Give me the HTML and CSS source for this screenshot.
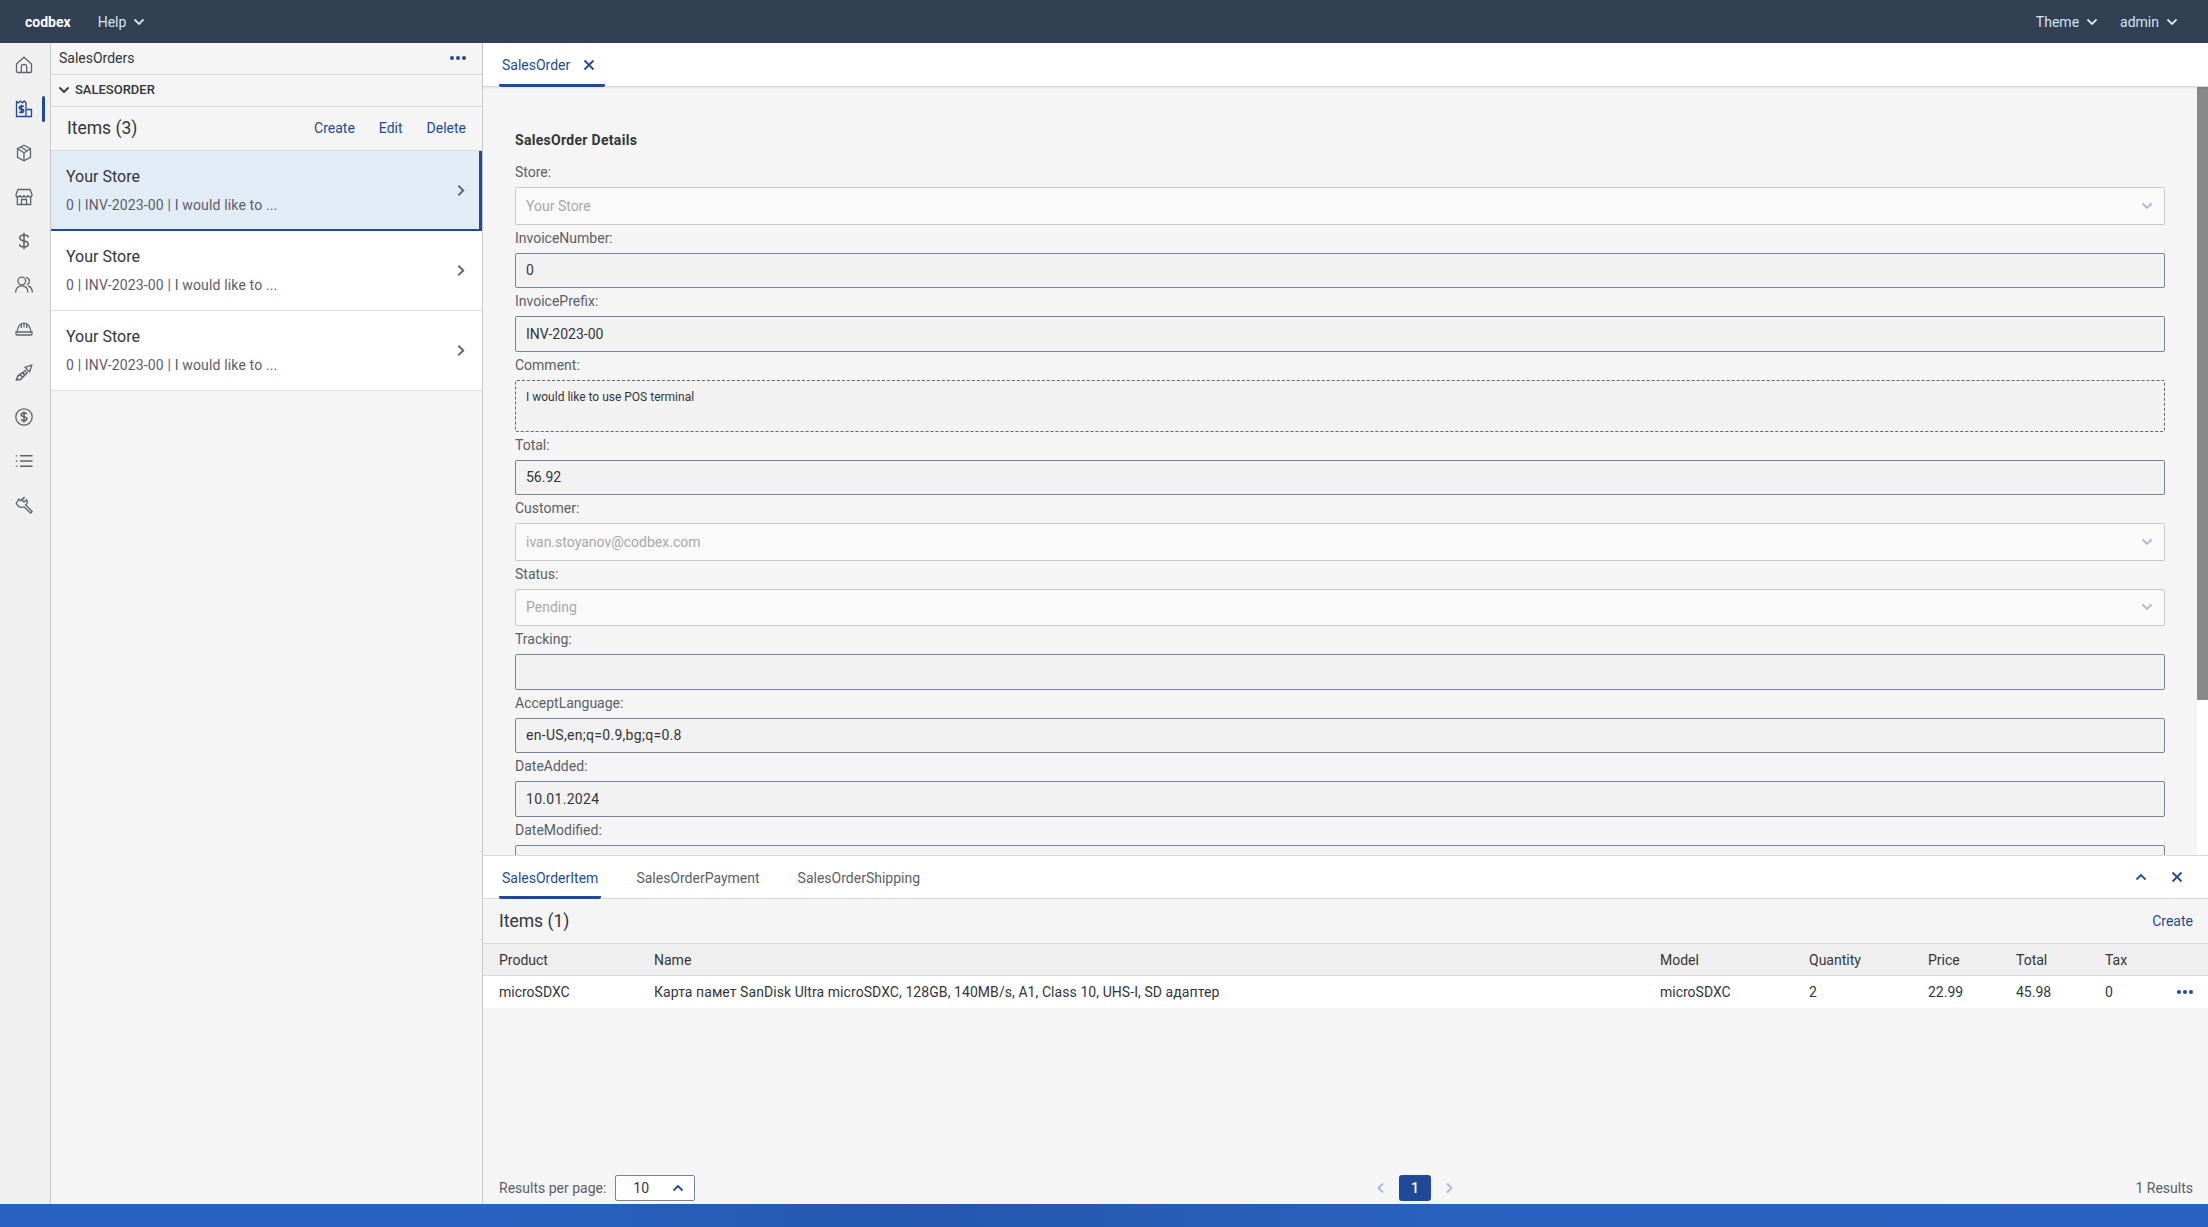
FILE: index.html
```html
<!DOCTYPE html>
<html lang="en">
<head>
    <meta charset="UTF-8">
    <title>codbex</title>
    <link rel="stylesheet" href="styles.css">
</head>
<body>
    <header class="topbar">
        <span class="brand">codbex</span>
        <span class="top-menu help">Help <svg class="chev" viewBox="0 0 12 12"><path d="M1.500 3.500 6 8l4.500-4.500"/></svg></span>
        <span class="top-menu theme">Theme <svg class="chev" viewBox="0 0 12 12"><path d="M1.500 3.500 6 8l4.500-4.500"/></svg></span>
        <span class="top-menu user">admin <svg class="chev" viewBox="0 0 12 12"><path d="M1.500 3.500 6 8l4.500-4.500"/></svg></span>
    </header>

    <div class="app">
        <nav class="sidenav">
            <div class="nav-item"><svg viewBox="0 0 18 18"><path d="M1.500 8 9 1.200 16.500 8v7.300a1.200 1.200 0 0 1-1.200 1.200H2.700a1.200 1.200 0 0 1-1.200-1.200z"/><path d="M6.300 16.500V11a2.700 2.700 0 0 1 5.400 0v5.500"/></svg></div>
            <div class="nav-item active"><svg viewBox="0 0 18 18"><path d="M1.500 1.500l1.800 1.300 2-1.800 2 1.800 2-1.800 1.700 1.800V16.500h-9.500z"/><path d="M11.500 9.500h5v7h-5"/><path class="thick" d="M8.800 6.200H5.900a1.300 1.300 0 0 0 0 3h1.300a1.300 1.300 0 0 1 0 3H4.200M6.500 4.800v8.800"/></svg><span class="nav-mark"></span></div>
            <div class="nav-item"><svg viewBox="0 0 18 18"><path d="M9 1.200l6.500 3.500v8.600L9 16.800l-6.500-3.500V4.700z"/><path d="M2.500 4.700 9 8.800l6.500-4.100M9 8.800v8M5.700 3l6.500 3.800"/></svg></div>
            <div class="nav-item"><svg viewBox="0 0 18 18"><path d="M3 1.500h12l2 5a2 2 0 0 1-4 .5 2 2 0 0 1-4 0 2 2 0 0 1-4 0 2 2 0 0 1-4-.5z"/><path d="M2.300 9v7.500h13.400V9M6.500 16.500v-5h5v5"/></svg></div>
            <div class="nav-item"><svg viewBox="0 0 18 18"><path class="thick" d="M13.500 5.500C13.200 4 11.500 3 9 3 6.500 3 4.800 4.200 4.800 6c0 2 2.200 2.600 4.200 3s4.300 1 4.300 3c0 1.900-1.800 3-4.300 3s-4.200-1-4.500-2.600M9 .8v16.400"/></svg></div>
            <div class="nav-item"><svg viewBox="0 0 18 18"><circle cx="6.800" cy="5" r="3.800"/><path d="M.6 16.500C.8 12 3.100 9.800 6.800 9.800s6 2.200 6.200 6.700M11 1.300a3.800 3.800 0 0 1 1 7.300M13.200 10c2.600.7 4 3 4.200 6.500"/></svg></div>
            <div class="nav-item"><svg viewBox="0 0 18 18"><path d="M2.300 12C2.300 6.500 5.300 3.200 9 3.200s6.700 3.300 6.700 8.800"/><path d="M1 12h16v2a1 1 0 0 1-1 1H2a1 1 0 0 1-1-1zM6.300 4v4M9 3.200v4M11.700 4v4"/></svg></div>
            <div class="nav-item"><svg viewBox="0 0 18 18"><path d="M10 3.300 16.800 1 14.700 7.900z"/><path class="thick" d="M11.300 6.200 3 11.800l-1.500 4 4-.3 7.300-7.600M4.800 10.500l3 3M7.300 8.500l3 3"/></svg></div>
            <div class="nav-item"><svg viewBox="0 0 18 18"><circle cx="9" cy="9" r="8.200"/><path class="thick" d="M11.800 6.300C11.500 5.300 10.500 4.800 9 4.800c-1.700 0-2.800.8-2.800 2s1.400 1.700 2.800 2 2.800.8 2.800 2-1.100 2-2.800 2c-1.500 0-2.500-.6-2.800-1.600M9 3.500v11"/></svg></div>
            <div class="nav-item"><svg viewBox="0 0 18 18"><path class="thick" d="M5 3.800h12.500M5 9h12.500M5 14.200h12.500"/><path d="M.8 3.800h1.500M.8 9h1.500M.8 14.200h1.500"/></svg></div>
            <div class="nav-item"><svg viewBox="0 0 18 18"><path d="M9.500 1.200 7 3.800l2 2.200 2.600-2.200c1.200 1.800.8 3.800-1 5l6.500 6.700-1.500 1.500-6.700-6.200c-2.200 1.200-4 .6-5.400-.6L1.200 7.500 3.800 3l2 2"/><path d="M5 5 9.500 1.200"/></svg></div>
        </nav>

        <aside class="list-panel">
            <div class="panel-title">
                <span>SalesOrders</span>
                <span class="dots"><i></i><i></i><i></i></span>
            </div>
            <div class="panel-section">
                <svg class="chev dark" viewBox="0 0 12 12"><path d="M1.500 3.500 6 8l4.500-4.500"/></svg>
                <span>SALESORDER</span>
            </div>
            <div class="panel-toolbar">
                <span class="toolbar-title">Items (3)</span>
                <span class="link">Create</span>
                <span class="link">Edit</span>
                <span class="link">Delete</span>
            </div>
            <div class="list-item selected">
                <div class="list-text">
                    <div class="item-title">Your Store</div>
                    <div class="item-sub">0 | INV-2023-00 | I would like to ...</div>
                </div>
                <svg class="list-arrow" viewBox="0 0 12 12"><path d="M4 1.500 8.500 6 4 10.500"/></svg>
            </div>
            <div class="list-item">
                <div class="list-text">
                    <div class="item-title">Your Store</div>
                    <div class="item-sub">0 | INV-2023-00 | I would like to ...</div>
                </div>
                <svg class="list-arrow" viewBox="0 0 12 12"><path d="M4 1.500 8.500 6 4 10.500"/></svg>
            </div>
            <div class="list-item">
                <div class="list-text">
                    <div class="item-title">Your Store</div>
                    <div class="item-sub">0 | INV-2023-00 | I would like to ...</div>
                </div>
                <svg class="list-arrow" viewBox="0 0 12 12"><path d="M4 1.500 8.500 6 4 10.500"/></svg>
            </div>
        </aside>

        <main class="detail">
            <div class="tabbar top-tabs">
                <div class="tab current">SalesOrder <svg class="tab-close" viewBox="0 0 12 12"><path d="M1.500 1.500l9 9M10.500 1.500l-9 9"/></svg></div>
            </div>

            <div class="form-pane">
                <div class="form-scroll">
                    <h4 class="form-title">SalesOrder Details</h4>
                    <label class="field-label">Store:</label>
                    <div class="box select">Your Store <svg class="chev pale" viewBox="0 0 12 12"><path d="M1.500 3.500 6 8l4.500-4.500"/></svg></div>
                    <label class="field-label">InvoiceNumber:</label>
                    <div class="box">0</div>
                    <label class="field-label">InvoicePrefix:</label>
                    <div class="box">INV-2023-00</div>
                    <label class="field-label">Comment:</label>
                    <div class="box area">I would like to use POS terminal</div>
                    <label class="field-label">Total:</label>
                    <div class="box">56.92</div>
                    <label class="field-label">Customer:</label>
                    <div class="box select">ivan.stoyanov@codbex.com <svg class="chev pale" viewBox="0 0 12 12"><path d="M1.500 3.500 6 8l4.500-4.500"/></svg></div>
                    <label class="field-label">Status:</label>
                    <div class="box select">Pending <svg class="chev pale" viewBox="0 0 12 12"><path d="M1.500 3.500 6 8l4.500-4.500"/></svg></div>
                    <label class="field-label">Tracking:</label>
                    <div class="box"></div>
                    <label class="field-label">AcceptLanguage:</label>
                    <div class="box wide-text">en-US,en;q=0.9,bg;q=0.8</div>
                    <label class="field-label">DateAdded:</label>
                    <div class="box wide-text">10.01.2024</div>
                    <label class="field-label">DateModified:</label>
                    <div class="box"></div>
                </div>
                <div class="scrollbar"><div class="thumb"></div></div>
            </div>

            <section class="related">
                <div class="tabbar related-tabs">
                    <div class="tab current">SalesOrderItem</div>
                    <div class="tab">SalesOrderPayment</div>
                    <div class="tab">SalesOrderShipping</div>
                    <div class="tab-tools">
                        <svg class="tool" viewBox="0 0 12 12"><path d="M1.500 8.500 6 4l4.500 4.500"/></svg>
                        <svg class="tool" viewBox="0 0 12 12"><path d="M1.500 1.500l9 9M10.500 1.500l-9 9"/></svg>
                    </div>
                </div>
                <div class="related-toolbar">
                    <span class="toolbar-title">Items (1)</span>
                    <span class="link">Create</span>
                </div>
                <div class="grid-row grid-head">
                    <span>Product</span><span>Name</span><span>Model</span><span>Quantity</span><span>Price</span><span>Total</span><span>Tax</span><span></span>
                </div>
                <div class="grid-row grid-body">
                    <span>microSDXC</span><span class="name-cell">Карта памет SanDisk Ultra microSDXC, 128GB, 140MB/s, A1, Class 10, UHS-I, SD адаптер</span><span>microSDXC</span><span>2</span><span>22.99</span><span>45.98</span><span>0</span><span class="dots"><i></i><i></i><i></i></span>
                </div>
                <div class="pager">
                    <div class="pager-left">
                        <span class="muted">Results per page:</span>
                        <div class="page-size"><span>10</span><svg class="tool small" viewBox="0 0 12 12"><path d="M1.500 8.500 6 4l4.500 4.500"/></svg></div>
                    </div>
                    <div class="pager-mid">
                        <svg class="pg-arrow" viewBox="0 0 12 12"><path d="M8 1.500 3.500 6 8 10.500"/></svg>
                        <span class="page-num">1</span>
                        <svg class="pg-arrow" viewBox="0 0 12 12"><path d="M4 1.500 8.500 6 4 10.500"/></svg>
                    </div>
                    <div class="pager-right muted">1 Results</div>
                </div>
            </section>
        </main>
    </div>

    <footer class="bottombar"></footer>
</body>
</html>
```

FILE: styles.css
```css
* {
    box-sizing: border-box;
}

body, html {
    margin: 0;
    padding: 0;
    height: 100%;
    overflow: hidden;
    font-family: Roboto, "Noto Sans", "Liberation Sans", sans-serif;
    font-size: 14px;
    color: #32363a;
    background: #f5f5f5;
}

body {
    display: flex;
    flex-direction: column;
}

svg {
    fill: none;
    stroke: currentColor;
    stroke-width: 1.8;
    flex: none;
}

/* top bar */
.topbar {
    height: 43px;
    flex: none;
    background: #314053;
    color: #d1e4fa;
    display: flex;
    align-items: center;
    padding: 0 30px 0 25px;
}

.brand {
    color: #fff;
    font-weight: 700;
    font-size: 14px;
    margin-right: 27px;
}

.top-menu {
    display: flex;
    align-items: center;
    gap: 7px;
    font-size: 14px;
}

.theme {
    margin-left: auto;
    margin-right: 22px;
}

.chev {
    width: 12px;
    height: 12px;
}

.chev.dark {
    color: #32363a;
}

.chev.pale {
    color: #a9b9d8;
    margin-left: auto;
}

/* main area */
.app {
    flex: 1;
    display: flex;
    min-height: 0;
}

.sidenav {
    width: 51px;
    flex: none;
    background: #f0f0f0;
    border-right: 1px solid #c9c9c9;
}

.nav-item {
    height: 44px;
    display: flex;
    align-items: center;
    justify-content: center;
    padding-right: 2px;
    color: #5f6368;
    position: relative;
}

.nav-item svg {
    width: 18px;
    height: 18px;
    stroke-width: 1.3;
}

.nav-item svg .thick {
    stroke-width: 1.6;
}

.nav-item.active {
    color: #1f4a97;
}

.nav-mark {
    position: absolute;
    left: 42px;
    top: 9px;
    width: 3px;
    height: 26px;
    border-radius: 2px;
    background: #1f4a97;
}

/* list panel */
.list-panel {
    width: 432px;
    flex: none;
    border-right: 1px solid #c9c9c9;
    background: #f5f5f5;
}

.panel-title {
    height: 32px;
    display: flex;
    align-items: center;
    justify-content: space-between;
    padding: 0 16px 2px 8px;
    border-bottom: 1px solid #d9d9d9;
}

.dots {
    display: inline-flex;
    gap: 2px;
    color: #1f4a97;
}

.dots i {
    width: 4px;
    height: 4px;
    border-radius: 50%;
    background: currentColor;
}

.panel-section {
    height: 32px;
    display: flex;
    align-items: center;
    gap: 5px;
    padding: 0 0 2px 7px;
    font-size: 13px;
    font-weight: 500;
    border-bottom: 1px solid #d9d9d9;
}

.panel-toolbar {
    height: 44px;
    display: flex;
    align-items: center;
    gap: 24px;
    padding: 0 16px 2px;
    border-bottom: 1px solid #d9d9d9;
}

.toolbar-title {
    font-size: 17.5px;
    margin-right: auto;
}

.link {
    color: #1f4a97;
}

.list-item {
    height: 80px;
    background: #fff;
    display: flex;
    align-items: center;
    justify-content: space-between;
    padding: 0 15px;
    border-bottom: 1px solid #e0e0e0;
}

.list-item.selected {
    background: #e2ecf7;
    border-bottom: 2px solid #1f4a97;
    border-right: 3px solid #1f4a97;
    padding-right: 12px;
}

.list-text {
    margin-top: -1px;
}

.item-title {
    font-size: 16px;
    margin-bottom: 11px;
}

.item-sub {
    color: #5a6066;
    letter-spacing: 0.15px;
}

.list-arrow {
    width: 13px;
    height: 13px;
    color: #5f6368;
}

/* tabs */
.detail {
    flex: 1;
    min-width: 0;
    display: flex;
    flex-direction: column;
}

.tabbar {
    flex: none;
    background: #fff;
    display: flex;
    padding-left: 16px;
    border-bottom: 1px solid #d9d9d9;
}

.top-tabs {
    height: 44px;
    box-shadow: 0 1px 2px rgba(0, 0, 0, 0.08);
    position: relative;
}

.tab {
    padding: 3px 3px 0;
    display: flex;
    align-items: center;
    color: #5a6066;
    border-bottom: 3px solid transparent;
    margin-bottom: -1px;
    margin-right: 32px;
}

.tab.current {
    color: #1f4a97;
    border-bottom-color: #1f4a97;
    border-radius: 0 0 2px 2px;
}

.top-tabs .tab {
    gap: 13px;
    padding-right: 10px;
}

.tab-close {
    width: 12px;
    height: 12px;
}

/* form */
.form-pane {
    flex: 1;
    min-height: 0;
    display: flex;
}

.form-scroll {
    flex: 1;
    min-width: 0;
    overflow: hidden;
    padding: 45px 32px 0;
    background: #f5f5f5;
}

.form-title {
    margin: 0;
    font-size: 14px;
    font-weight: 700;
    line-height: 16px;
    letter-spacing: 0.3px;
}

.field-label {
    display: block;
    height: 28px;
    line-height: 26px;
    color: #5a6066;
}

.form-title + .field-label {
    height: 39px;
    padding-top: 11px;
}

.box {
    height: 35.5px;
    display: flex;
    align-items: center;
    padding: 0 10px;
    color: #32363a;
    background: #f2f2f2;
    border: 1px solid #7a8499;
    border-radius: 2px;
}

.box.wide-text {
    letter-spacing: 0.3px;
}

.box.select {
    height: 37.5px;
    padding-right: 11px;
    background: #fafafa;
    border-color: #c7c9cf;
    color: #a8a8a8;
}

.box.area {
    height: 52px;
    align-items: flex-start;
    padding-top: 9px;
    font-size: 12px;
    line-height: 14px;
    border: 1px dashed #666;
}

.scrollbar {
    width: 11px;
    flex: none;
    background: #fff;
}

.thumb {
    height: 613px;
    background: #888;
}

/* related items */
.related {
    height: 349px;
    flex: none;
    display: flex;
    flex-direction: column;
    border-top: 1px solid #d9d9d9;
    background: #f5f5f5;
}

.related-tabs {
    height: 43px;
    align-items: stretch;
}

.tab-tools {
    margin-left: auto;
    display: flex;
    align-items: center;
    gap: 24px;
    padding-right: 25px;
    color: #1f4a97;
}

.tool {
    width: 12px;
    height: 12px;
}

.related-toolbar {
    height: 44px;
    display: flex;
    align-items: center;
    padding: 0 15px 0 16px;
}

.grid-row {
    display: grid;
    grid-template-columns: 155px 1006px 149px 119px 88px 89px 1fr 20px;
    align-items: center;
    padding: 0 15px 0 16px;
}

.grid-head {
    height: 33px;
    background: #efefef;
    border-top: 1px solid #d9d9d9;
    border-bottom: 1px solid #d9d9d9;
}

.grid-body {
    height: 32px;
    background: #fff;
}

.grid-body .dots {
    justify-self: end;
}

.name-cell {
    letter-spacing: 0.07px;
}

.pager {
    margin-top: auto;
    height: 26px;
    margin-bottom: 3px;
    display: grid;
    grid-template-columns: 876px auto 1fr;
    align-items: center;
    padding: 0 15px 0 16px;
}

.muted {
    color: #5a6066;
}

.pager-left {
    display: flex;
    align-items: center;
    gap: 9px;
}

.page-size {
    width: 80px;
    height: 26px;
    display: flex;
    align-items: center;
    justify-content: space-between;
    padding: 0 10px 0 17px;
    background: #fff;
    border: 1px solid #7a8499;
    border-radius: 2px;
}

.tool.small {
    color: #1f4a97;
}

.pager-mid {
    display: flex;
    align-items: center;
    gap: 12px;
}

.pg-arrow {
    width: 12px;
    height: 12px;
    color: #a9b9d8;
}

.page-num {
    width: 32px;
    height: 26px;
    display: flex;
    align-items: center;
    justify-content: center;
    color: #fff;
    font-weight: 500;
    background: #1f4a97;
    border-radius: 3px;
}

.pager-right {
    text-align: right;
}

.bottombar {
    height: 23px;
    flex: none;
    background: linear-gradient(90deg, #2a62c4 0%, #2a62c4 20%, #2558ae 42%, #2a60be 65%, #2a62c4 100%);
}
```
